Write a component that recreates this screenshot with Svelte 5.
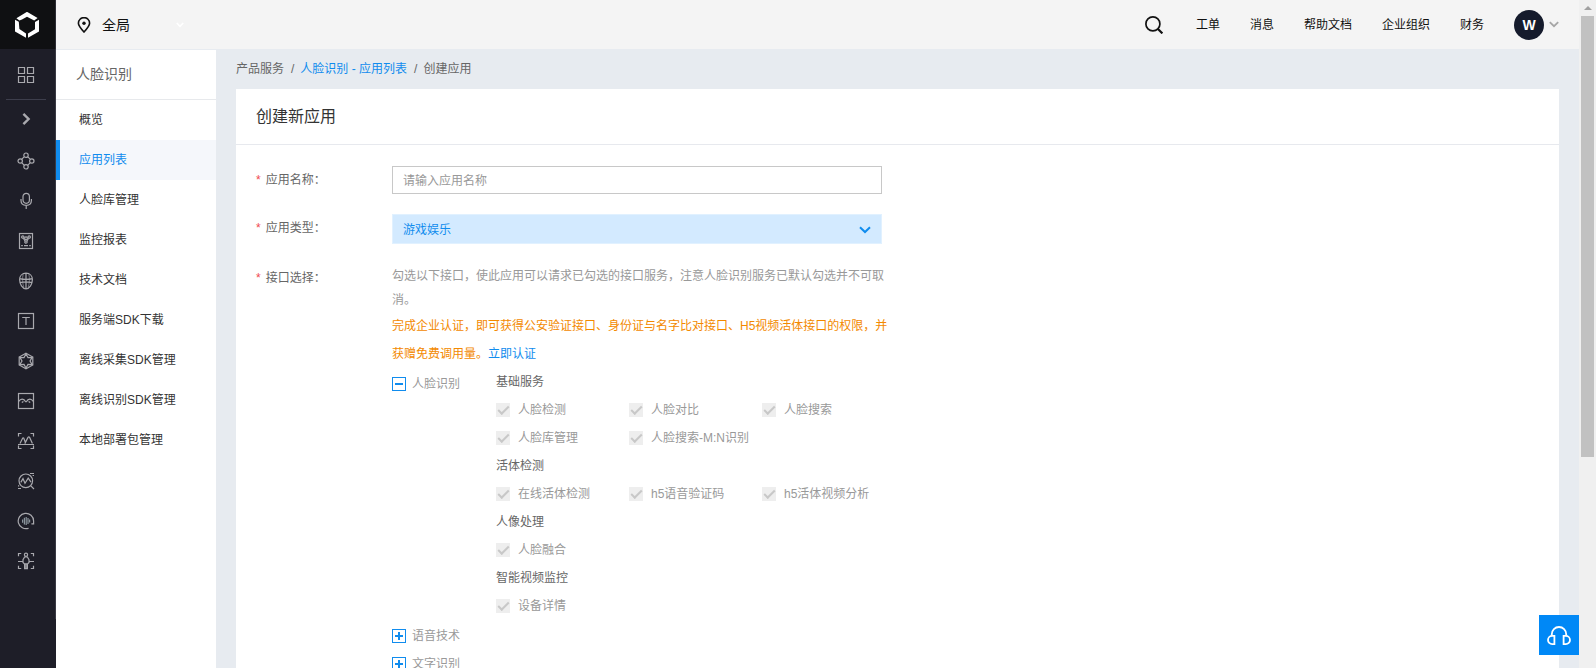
<script>
  const topLinks = ['工单', '消息', '帮助文档', '企业组织', '财务'];
  const menu = [
    '概览', '应用列表', '人脸库管理', '监控报表', '技术文档',
    '服务端SDK下载', '离线采集SDK管理', '离线识别SDK管理', '本地部署包管理'
  ];
  const active = '应用列表';

  const groups = [
    { title: '基础服务', items: ['人脸检测', '人脸对比', '人脸搜索', '人脸库管理', '人脸搜索-M:N识别'] },
    { title: '活体检测', items: ['在线活体检测', 'h5语音验证码', 'h5活体视频分析'] },
    { title: '人像处理', items: ['人脸融合'] },
    { title: '智能视频监控', items: ['设备详情'] }
  ];
  const collapsed = ['语音技术', '文字识别'];

  let appName = $state('');
  let appType = $state('游戏娱乐');
</script>

{#snippet box(open)}
  <svg width="14" height="14" viewBox="0 0 14 14" fill="none" stroke="#108cee" aria-hidden="true">
    <rect x="0.5" y="0.5" width="13" height="13" />
    <path d="M3 7h8" stroke-width="2" />
    {#if !open}<path d="M7 3v8" stroke-width="2" />{/if}
  </svg>
{/snippet}

<div class="window">
  <div class="app">
    <header>
      <a class="logo" href="#home" aria-label="首页">
        <svg width="26" height="26" viewBox="0 1 26 26" fill="#fff">
          <path d="M2.4 7.2 13 .8 23.6 7 20.2 9.4 13 5.8 8 8.6 5.4 9.6z" />
          <path d="M1 8.8 4.8 10.8 5.4 18 12 22.4V26.8L1 20.4z" />
          <path d="M25 8.8 21 11V18.2L14 22.4V26.8L25 20.4z" />
        </svg>
      </a>
      <button class="region">
        <svg width="14" height="16" viewBox="0 0 14 16" fill="none" stroke="#111" stroke-width="1.6">
          <path d="M7 15C3.4 11 1.4 8.6 1.4 6.2a5.6 5.6 0 0 1 11.2 0C12.6 8.6 10.6 11 7 15z" />
          <circle cx="7" cy="6.3" r="1.7" fill="#111" stroke="none" />
        </svg>
        <span>全局</span>
        <svg class="faint" width="8" height="6" viewBox="0 0 8 6" fill="none" stroke="#fff" stroke-width="1.6"><path d="M.8 1 4 4.4 7.2 1" /></svg>
      </button>
      <nav class="top">
        <button class="search" aria-label="搜索">
          <svg width="18" height="18" viewBox="0 0 18 18" fill="none" stroke="#111" stroke-width="1.7">
            <circle cx="7.9" cy="7.9" r="7" /><path d="M13 13 17.4 17.4" stroke-width="2.2" />
          </svg>
        </button>
        {#each topLinks as link}<a href="#top">{link}</a>{/each}
        <button class="user">
          <span class="avatar">W</span>
          <svg width="10" height="7" viewBox="0 0 10 7" fill="none" stroke="#a6a6a6" stroke-width="1.8"><path d="M.8 1.2 5 5.2 9.2 1.2" /></svg>
        </button>
      </nav>
    </header>

    <div class="body">
      <nav class="rail" aria-label="产品">
        <div class="rail-list">
          <a class="grid" href="#all" aria-label="全部产品">
            <svg viewBox="0 0 18 18"><path d="M1.5 1.5h6v6h-6zM10.5 1.5h6v6h-6zM1.5 10.5h6v6h-6zM10.5 10.5h6v6h-6z" /></svg>
          </a>
          <a class="expand" href="#expand" aria-label="展开">
            <svg viewBox="0 0 18 18"><path d="M6.4 3.8 11.6 9 6.4 14.2" stroke-width="2.4" /></svg>
          </a>
          <a href="#p1" aria-label="产品一">
            <svg viewBox="0 0 18 18"><circle cx="9" cy="3.2" r="2.2" /><circle cx="9" cy="14.8" r="2.2" /><circle cx="3.2" cy="9" r="2.2" /><circle cx="14.8" cy="9" r="2.2" /><path d="M7.2 4.8 4.8 7.2M10.8 4.8 13.2 7.2M4.8 10.8 7.2 13.2M13.2 10.8 10.8 13.2" /></svg>
          </a>
          <a href="#p2" aria-label="产品二">
            <svg viewBox="0 0 18 18"><rect x="6" y="1.3" width="6.4" height="10" rx="3.2" /><path d="M4 7v1.6c0 3 2.2 4.8 5.2 4.8s5.2-1.8 5.2-4.8V7M9.2 13.4v3.6" /></svg>
          </a>
          <a href="#p3" aria-label="产品三">
            <svg viewBox="0 0 18 18"><rect x="2.5" y="1.5" width="13" height="15" /><circle cx="5.8" cy="5" r="1.2" /><circle cx="12.2" cy="5" r="1.2" /><circle cx="9" cy="6.2" r="1.4" /><path d="M6.4 6.2 8 9M11.6 6.2 10 9" /><circle cx="9" cy="10" r="1.2" /><path d="M4.2 13.6h1.6M7 13.6h4M12.2 13.6h1.6" /></svg>
          </a>
          <a href="#p4" aria-label="产品四">
            <svg viewBox="0 0 18 18"><path d="M9 1.2C5 1.2 2.6 4 2.6 7.6 2.6 12 5.4 16.8 9 16.8s6.4-4.8 6.4-9.2C15.4 4 13 1.2 9 1.2zM9 1.2v15.6M2.6 6.6c3.8 1 9 1 12.8 0M3 10.6c3.6-.8 8.4-.8 12 0" /><path d="M6.2 2c-1 4-.8 9.6.8 13.8M11.8 2c1 4 .8 9.6-.8 13.8" stroke-width=".6" /></svg>
          </a>
          <a href="#p5" aria-label="产品五">
            <svg viewBox="0 0 18 18"><rect x="1.5" y="1.5" width="15" height="15" /><path d="M5.2 5.5h7.6M9 5.5v7.4" /></svg>
          </a>
          <a href="#p6" aria-label="产品六">
            <svg viewBox="0 0 18 18"><path d="M9 1.2 15.8 5v8L9 16.8 2.2 13V5z" /><path d="M9 2 11 5.6 15.2 5.4 13 9l2.2 3.6-4.2-.2L9 16 7 12.4l-4.2.2L5 9 2.8 5.4 7 5.6z" /></svg>
          </a>
          <a href="#p7" aria-label="产品七">
            <svg viewBox="0 0 18 18"><rect x="1.5" y="1.5" width="15" height="15" /><path d="M1.5 9.6C3 7.6 5 6.8 6.6 7.6 8 8.4 8 9.8 9 9.8s1-1.4 2.4-2.2c1.6-.8 3.6 0 5.1 2M4.8 10.6l1.6-1.2M11.6 9.4l1.6 1.2" /></svg>
          </a>
          <a href="#p8" aria-label="产品八">
            <svg viewBox="0 0 18 18"><path d="M1.5 4.5v-3h3M13.5 1.5h3v3M1.5 13.5v3h3M13.5 16.5h3v-3M3 11.6 5.6 6.2q.6-.8 1.2 0L8.6 11M7.8 11.6l3.2-6.2q.8-1 1.6 0l2.8 6.2M1 12.5h16" /></svg>
          </a>
          <a href="#p9" aria-label="产品九">
            <svg viewBox="0 0 18 18"><circle cx="8.8" cy="8.8" r="6.8" /><path d="M13.6 13.6l3.4 3.4M3.8 10.4 6 6.6l2 4.6 3.2-5 2.8 4M13 1.5h4M15.6 3.5h1.4M1 13.8h1.2M1 16.5h3" /></svg>
          </a>
          <a href="#p10" aria-label="产品十">
            <svg viewBox="0 0 18 18"><path d="M11.6 16.2A7.7 7.7 0 1 1 16.6 9v3.4M14.4 11.8h2.4" /><path d="M5.6 7.4v3.4M7.4 5.8v6.6M9.2 5v8M11 6v6M12.6 7.6v3" stroke="#8a949c" /></svg>
          </a>
          <a href="#p11" aria-label="产品十一">
            <svg viewBox="0 0 18 18"><path d="M1.5 4.2V1.5h2.7M13.8 1.5h2.7v2.7M1.5 13.8v2.7h2.7M13.8 16.5h2.7v-2.7M1 9.5h5M12 9.5h5" /><circle cx="9" cy="2.8" r="1.6" /><path d="M7.6 5h2.8L12 7.6v2.8l-1.4 1.4H7.4L6 10.4V7.6zM7.6 12v4.6h2.8V12M9 12v4" /></svg>
          </a>
        </div>
      </nav>

      <aside>
        <h2>人脸识别</h2>
        <ul>
          {#each menu as item}
            <li><a href="#menu" class:active={item === active}>{item}</a></li>
          {/each}
        </ul>
      </aside>

      <main>
        <nav class="crumbs" aria-label="路径">
          <span>产品服务</span><i>/</i><a href="#list">人脸识别 - 应用列表</a><i>/</i><span>创建应用</span>
        </nav>
        <section class="card">
          <h1>创建新应用</h1>
          <form>
            <div class="field">
              <label class="name" for="app-name"><b>*</b>应用名称：</label>
              <input id="app-name" type="text" placeholder="请输入应用名称" bind:value={appName} />
            </div>
            <div class="field">
              <label class="name" for="app-type"><b>*</b>应用类型：</label>
              <div class="select">
                <select id="app-type" bind:value={appType}>
                  <option>游戏娱乐</option>
                </select>
                <svg width="12" height="8" viewBox="0 0 12 8" fill="none" stroke="#108cee" stroke-width="2"><path d="M1 1.2 6 6 11 1.2" /></svg>
              </div>
            </div>
            <div class="field">
              <span class="name" id="api-label"><b>*</b>接口选择：</span>
              <div class="apis" role="group" aria-labelledby="api-label">
                <p class="hint">勾选以下接口，使此应用可以请求已勾选的接口服务，注意人脸识别服务已默认勾选并不可取消。</p>
                <p class="notice">完成企业认证，即可获得公安验证接口、身份证与名字比对接口、H5视频活体接口的权限，并获赠免费调用量。<a href="#verify">立即认证</a></p>
                <div class="branch">
                  <button type="button" class="node">{@render box(true)}人脸识别</button>
                  <div class="groups">
                    {#each groups as group}
                      <h3>{group.title}</h3>
                      <div class="checks">
                        {#each group.items as item}
                          <label><input type="checkbox" checked disabled />{item}</label>
                        {/each}
                      </div>
                    {/each}
                  </div>
                </div>
                {#each collapsed as item}
                  <button type="button" class="node">{@render box(false)}{item}</button>
                {/each}
              </div>
            </div>
          </form>
        </section>
      </main>
    </div>

    <button class="support" aria-label="在线客服">
      <svg width="26" height="22" viewBox="0 0 26 22" fill="none" stroke="#fff" stroke-width="1.8">
        <path d="M5.8 11.6v-1.4a7.2 7.2 0 0 1 14.4 0v1.4" />
        <path d="M8.4 11.8v8.4H6.2a4.2 4.2 0 0 1 0-8.4zM17.6 11.8v8.4h2.2a4.2 4.2 0 0 0 0-8.4z" />
      </svg>
    </button>
  </div>
  <div class="scrollbar" aria-hidden="true"><span class="arrow"></span><span class="thumb"></span></div>
</div>

<style>
  :global(body) {
    overflow: hidden;
    font-family: "Liberation Sans", "Noto Sans CJK SC", sans-serif;
    font-size: 12px;
    color: #666;
  }
  * { box-sizing: border-box; }
  h1, h2, h3, p, ul { margin: 0; padding: 0; font-weight: 400; }
  ul { list-style: none; }
  a { text-decoration: none; color: inherit; }
  button {
    padding: 0;
    border: 0;
    background: none;
    font: inherit;
    color: inherit;
    cursor: pointer;
  }
  svg { display: block; flex: none; }

  .window { display: flex; height: 100vh; }
  .app { position: relative; display: flex; flex-direction: column; flex: 1; min-width: 0; }

  header { display: flex; align-items: center; height: 49px; flex: none; background: #f4f4f4; color: #111; line-height: 28px; }
  .logo {
    display: flex;
    justify-content: center;
    align-items: center;
    width: 56px;
    height: 49px;
    padding-right: 2px;
    background: #0f1012;
    border-right: 1px solid #2c2c34;
  }
  .region { display: flex; align-items: center; gap: 11px; padding-left: 21px; font-size: 14px; }
  .faint { margin-left: 35px; }
  .top { display: flex; align-items: center; gap: 30px; margin-left: auto; padding-right: 20px; }
  .search { margin-right: 3px; }
  .user { display: flex; align-items: center; gap: 5px; }
  .avatar {
    display: grid;
    place-items: center;
    width: 30px;
    height: 30px;
    border-radius: 50%;
    background: #151b2c;
    color: #fff;
    font-size: 14px;
    font-weight: 700;
  }

  .body { display: flex; flex: 1; min-height: 0; }
  .rail { display: flex; flex: none; width: 56px; padding-bottom: 49px; background: #1e1e28; }
  .rail-list { flex: 1; border-right: 1px solid #3a3a44; }
  .rail a { display: flex; align-items: center; height: 40px; padding-left: 17px; }
  .rail a.grid { height: 51px; margin: 0 9px 0 6px; padding: 2px 0 0 11px; border-bottom: 1px solid #3d3e4c; }
  .rail a.expand { height: 38px; margin-bottom: 3px; }
  .rail svg { width: 18px; height: 18px; fill: none; stroke: #a9a9ae; stroke-width: 1.2; }

  aside { flex: none; width: 160px; background: #fff; color: #333; border-top: 1px solid #e7ebf0; }
  aside h2 { height: 50px; padding-left: 20px; border-bottom: 1px solid #e7e9ec; color: #666; font-size: 14px; line-height: 49px; }
  aside li a { display: block; height: 40px; padding-left: 19px; border-left: 4px solid transparent; line-height: 40px; }
  aside li a.active { border-color: #108cee; background: #f5f7fb; color: #108cee; }

  main { flex: 1; min-width: 0; padding: 0 20px; overflow-y: auto; scrollbar-width: none; background: #e7ebf0; }
  .crumbs { display: flex; height: 40px; line-height: 40px; }
  .crumbs a, .notice a { color: #108cee; }
  .crumbs i { margin: 0 6px 0 7px; font-style: normal; }
  .card { min-height: calc(100vh - 89px); background: #fff; }
  h1 { height: 56px; padding-left: 20px; border-bottom: 1px solid #e7e9ee; color: #333; font-size: 16px; line-height: 56px; }
  form { display: flex; flex-direction: column; gap: 20px; padding: 21px 20px; }
  .field { display: flex; align-items: flex-start; }
  .name { flex: none; width: 136px; line-height: 28px; }
  .name b { margin-right: 5px; color: #f0494f; font-weight: 400; }
  input[type="text"], select {
    display: block;
    width: 490px;
    height: 28px;
    padding: 1px 10px 0;
    border: 1px solid #c8c8c8;
    border-radius: 0;
    background: #fff;
    font: inherit;
    color: #333;
    outline: 0;
  }
  input::placeholder { color: #999; }
  .select { position: relative; }
  select { appearance: none; height: 30px; border-color: #e1f1ff; background: #d3eaff; color: #108cee; }
  .select svg { position: absolute; top: 12px; right: 11px; pointer-events: none; }

  .apis { width: 500px; color: #999; }
  .hint { line-height: 24px; }
  .notice { color: #f38900; line-height: 28px; }
  .branch { display: flex; }
  .branch .node { width: 104px; margin-top: 2px; }
  .groups { flex: 1; min-width: 0; margin-bottom: 2px; }
  .node { display: flex; align-items: center; gap: 6px; height: 28px; line-height: 28px; }
  h3 { color: #666; font-size: 12px; line-height: 28px; }
  .checks { display: grid; grid-template-columns: repeat(3, 133px); }
  .checks label { display: flex; align-items: center; gap: 8px; height: 28px; line-height: 28px; white-space: nowrap; }
  .checks input { display: grid; place-items: center; appearance: none; flex: none; width: 14px; height: 14px; margin: 0; background: #eee; }
  .checks input::after {
    content: "";
    box-sizing: border-box;
    width: 11px;
    height: 6px;
    margin-bottom: 3px;
    border: solid #c8c8c8;
    border-width: 0 0 2px 2px;
    transform: rotate(-45deg);
  }

  .support {
    position: absolute;
    right: 0;
    bottom: 13px;
    display: grid;
    place-items: center;
    width: 40px;
    height: 40px;
    background: #0088f6;
  }

  .scrollbar { display: flex; flex-direction: column; align-items: center; flex: none; width: 17px; background: #f0f0f0; }
  .arrow { margin: 6px 0; border: solid transparent; border-width: 0 4px 4px; border-bottom-color: #a0a0a0; }
  .thumb { width: 13px; height: 66%; background: #c1c1c1; }
</style>
